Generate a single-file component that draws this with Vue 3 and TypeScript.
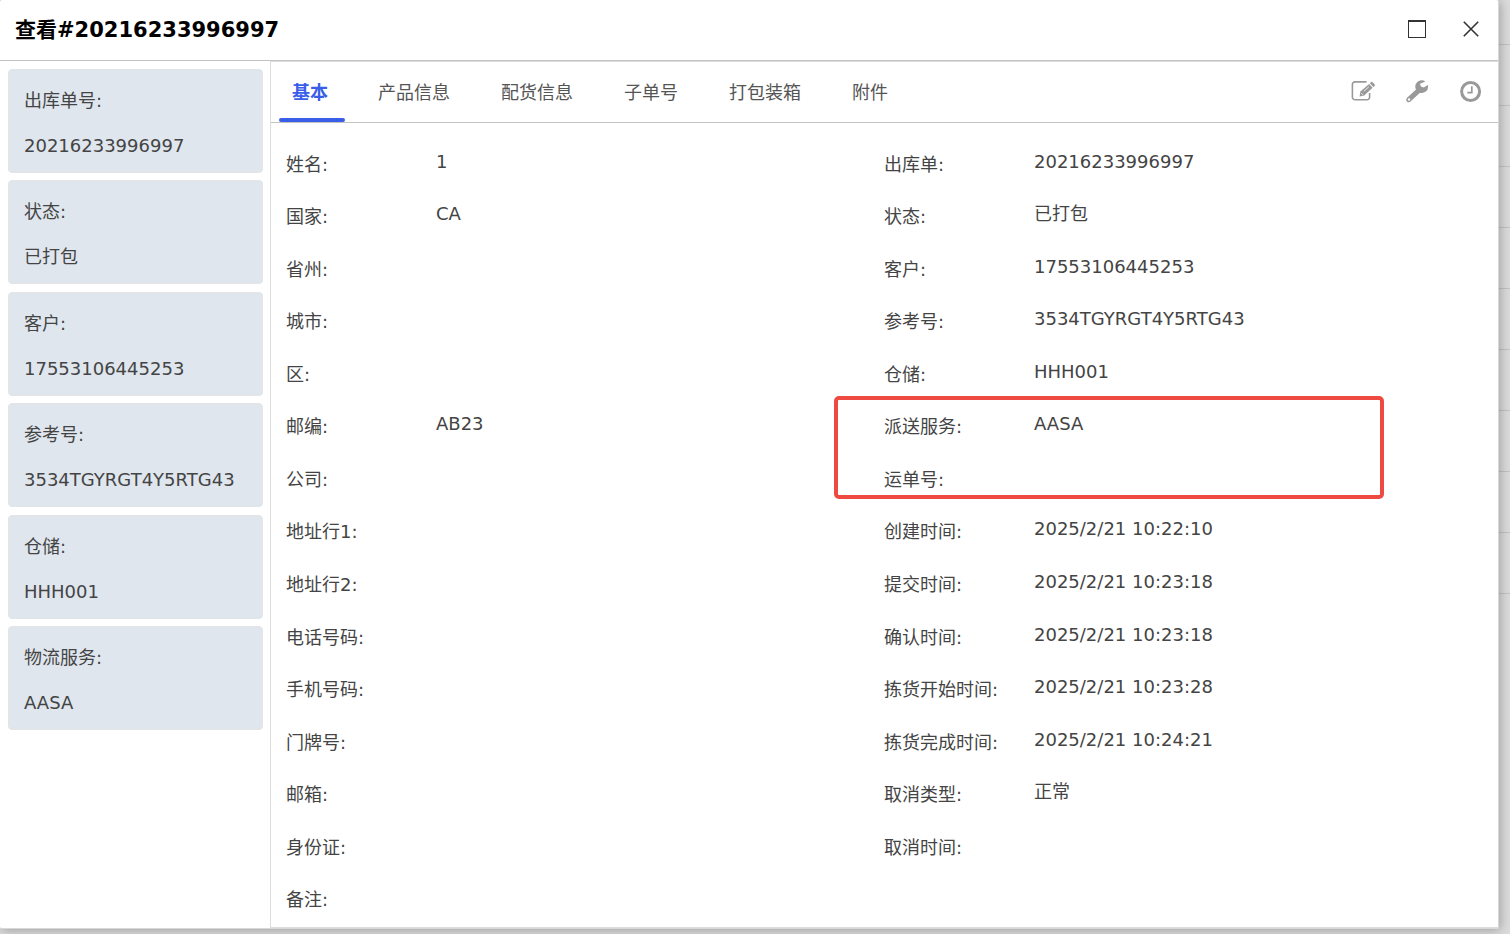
<script setup lang="ts">
import { ref } from 'vue'

interface Field {
  label: string
  value: string
}

const orderNo = '20216233996997'

const summary: Field[] = [
  { label: '出库单号:', value: orderNo },
  { label: '状态:', value: '已打包' },
  { label: '客户:', value: '17553106445253' },
  { label: '参考号:', value: '3534TGYRGT4Y5RTG43' },
  { label: '仓储:', value: 'HHH001' },
  { label: '物流服务:', value: 'AASA' },
]

const tabs: string[] = ['基本', '产品信息', '配货信息', '子单号', '打包装箱', '附件']
const activeTab = ref<string>('基本')

const recipient: Field[] = [
  { label: '姓名:', value: '1' },
  { label: '国家:', value: 'CA' },
  { label: '省州:', value: '' },
  { label: '城市:', value: '' },
  { label: '区:', value: '' },
  { label: '邮编:', value: 'AB23' },
  { label: '公司:', value: '' },
  { label: '地址行1:', value: '' },
  { label: '地址行2:', value: '' },
  { label: '电话号码:', value: '' },
  { label: '手机号码:', value: '' },
  { label: '门牌号:', value: '' },
  { label: '邮箱:', value: '' },
  { label: '身份证:', value: '' },
  { label: '备注:', value: '' },
]

const orderHead: Field[] = [
  { label: '出库单:', value: orderNo },
  { label: '状态:', value: '已打包' },
  { label: '客户:', value: '17553106445253' },
  { label: '参考号:', value: '3534TGYRGT4Y5RTG43' },
  { label: '仓储:', value: 'HHH001' },
]

const delivery: Field[] = [
  { label: '派送服务:', value: 'AASA' },
  { label: '运单号:', value: '' },
]

const orderTimes: Field[] = [
  { label: '创建时间:', value: '2025/2/21 10:22:10' },
  { label: '提交时间:', value: '2025/2/21 10:23:18' },
  { label: '确认时间:', value: '2025/2/21 10:23:18' },
  { label: '拣货开始时间:', value: '2025/2/21 10:23:28' },
  { label: '拣货完成时间:', value: '2025/2/21 10:24:21' },
  { label: '取消类型:', value: '正常' },
  { label: '取消时间:', value: '' },
]

const order: Field[] = [...orderHead, ...delivery, ...orderTimes]
const firstMarked = orderHead.length
</script>

<template>
  <div class="page">
    <div class="backdrop" aria-hidden="true">
      <div v-for="n in 10" :key="n" class="backdrop-row"></div>
    </div>

    <section class="dialog" role="dialog" aria-labelledby="dialog-title">
      <header class="dialog-head">
        <h1 id="dialog-title">查看#{{ orderNo }}</h1>
        <div class="window-buttons">
          <button type="button" aria-label="最大化">
            <svg width="24" height="24" viewBox="0 0 24 24" fill="none" stroke="#333">
              <path d="M3.5 3v18M20.5 3v18" stroke-width="1" />
              <path d="M3 4h18" stroke-width="2" />
              <path d="M3 20.5h18" stroke-width="1" />
            </svg>
          </button>
          <button type="button" aria-label="关闭">
            <svg width="24" height="24" viewBox="0 0 24 24" fill="none" stroke="#333" stroke-width="1.6">
              <path d="M4.8 4.8l14.4 14.4M19.2 4.8L4.8 19.2" />
            </svg>
          </button>
        </div>
      </header>

      <div class="dialog-body">
        <aside class="sidebar">
          <dl class="cards">
            <div v-for="item in summary" :key="item.label" class="card">
              <dt>{{ item.label }}</dt>
              <dd>{{ item.value }}</dd>
            </div>
          </dl>
        </aside>

        <main class="panel">
          <div class="toolbar">
            <nav class="tabs" role="tablist">
              <button
                v-for="tab in tabs"
                :key="tab"
                type="button"
                role="tab"
                class="tab"
                :class="{ active: tab === activeTab }"
                :aria-selected="tab === activeTab"
                @click="activeTab = tab"
              >
                {{ tab }}
              </button>
            </nav>
            <div class="tools">
              <button type="button" aria-label="编辑">
                <svg width="24" height="24" viewBox="0 0 24 24">
                  <path d="M15.500 2.900H4a2.600 2.600 0 0 0-2.600 2.600v12.700a2.600 2.600 0 0 0 2.600 2.600h12a2.600 2.600 0 0 0 2.600-2.600V14" fill="none" stroke="#999" stroke-width="1.600" />
                  <path d="M8.600 17.600l.8-5.100 8.700-7.600 3.500 3.900-8.400 7.700z" fill="#999" />
                  <path d="M18.900 4.200l1.300-1.100a1.100 1.100 0 0 1 1.500.1l2 2.300a1.100 1.100 0 0 1-.1 1.500l-1.300 1.100z" fill="#999" />
                  <path d="M10.200 14.100l1.800 1.900M12.800 12.300l5-4.500" stroke="#fff" stroke-width=".8" fill="none" />
                </svg>
              </button>
              <button type="button" aria-label="设置">
                <svg width="24" height="24" viewBox="0 0 24 24">
                  <path d="M3.800 20.700l9.200-8.600" fill="none" stroke="#999" stroke-width="5" stroke-linecap="round" />
                  <path d="M20.400 2.400a6.400 6.400 0 1 0 2.700 5.200l-.3-1.700-4 2.600-2.900-.9-.9-2.900z" fill="#999" />
                  <circle cx="4" cy="20.500" r="1.200" fill="#fff" />
                </svg>
              </button>
              <button type="button" aria-label="历史">
                <svg width="24" height="24" viewBox="0 0 24 24" fill="none" stroke="#999">
                  <circle cx="11.600" cy="12.500" r="9" stroke-width="3" />
                  <path d="M12.800 7.200v6.400H8.300" stroke-width="1.700" />
                </svg>
              </button>
            </div>
          </div>

          <div class="details">
            <dl class="column">
              <div v-for="item in recipient" :key="item.label" class="row">
                <dt>{{ item.label }}</dt>
                <dd>{{ item.value }}</dd>
              </div>
            </dl>
            <dl class="column">
              <div
                v-for="(item, index) in order"
                :key="item.label"
                class="row"
                :class="{ marked: index === firstMarked }"
              >
                <dt>{{ item.label }}</dt>
                <dd>{{ item.value }}</dd>
              </div>
            </dl>
          </div>
        </main>
      </div>
    </section>
  </div>
</template>

<style>
html,
body {
  margin: 0;
  background: #dcdcdc;
}
</style>

<style scoped>
.page {
  position: relative;
  box-sizing: border-box;
  min-height: 100vh;
  display: flex;
  padding: 0 11px 5px 0;
  overflow: hidden;
  color: #444;
  font-family: Verdana, "DejaVu Sans", "Noto Sans CJK SC", sans-serif;
  font-size: 18px;
  line-height: 24px;
}

.backdrop {
  position: absolute;
  inset: 0;
  padding-top: 44px;
}

.backdrop-row {
  box-sizing: border-box;
  height: 61px;
  border-top: 1px solid #c3c3c3;
}

.dialog {
  position: relative;
  box-sizing: border-box;
  flex: 1;
  min-width: 0;
  display: flex;
  flex-direction: column;
  background: #fff;
  border-right: 1px solid #d8d8d8;
  border-bottom: 1px solid #d8d8d8;
  border-radius: 2px;
  box-shadow: 1px 1px 12px rgba(0, 0, 0, 0.3);
}

button {
  margin: 0;
  padding: 0;
  border: 0;
  background: none;
  color: inherit;
  font: inherit;
  cursor: pointer;
}

svg {
  display: block;
}

.dialog-head {
  display: flex;
  align-items: center;
  justify-content: space-between;
  height: 60px;
  padding: 0 15px;
  border-bottom: 1px solid #c3c3c3;
}

h1 {
  margin: 0;
  color: #000;
  font-size: 21px;
  line-height: 28px;
  font-weight: 700;
}

.window-buttons,
.tools {
  display: flex;
  gap: 30px;
  padding-bottom: 2px;
}

.dialog-body {
  flex: 1;
  display: flex;
}

.sidebar {
  flex: none;
  width: 255px;
  padding: 8px 7px 8px 8px;
}

dl,
dt,
dd {
  margin: 0;
}

.cards {
  display: flex;
  flex-direction: column;
  justify-content: space-between;
  min-height: 661px;
}

.card {
  box-sizing: border-box;
  min-height: 104px;
  padding: 18px 15px;
  border: 1px solid #e4e4e4;
  border-radius: 4px;
  background: #dfe6ee;
}

.card dt {
  padding-top: 1px;
  margin-bottom: 21px;
}

.card dd {
  margin-bottom: -4px;
}

.panel {
  flex: 1;
  min-width: 0;
  display: flex;
  flex-direction: column;
  border: 1px solid #dcdcdc;
  border-right: 0;
}

.toolbar {
  display: flex;
  justify-content: space-between;
  align-items: center;
  height: 60px;
  padding: 0 15px 0 8px;
  border-bottom: 1px solid #c3c3c3;
}

.tabs {
  display: flex;
  align-self: stretch;
  gap: 15px;
}

.tab {
  position: relative;
  padding: 2px 18px 0;
  color: #555;
}

.tab.active {
  padding: 2px 17px 0 13px;
  color: #3b5ee8;
  font-weight: 700;
}

.tab.active::after {
  content: "";
  position: absolute;
  inset: auto 0 0;
  height: 4px;
  border-radius: 2px;
  background: #3b5ee8;
}

.details {
  flex: 1;
  display: grid;
  grid-template-columns: 1fr 1fr;
  padding: 14px 16px 2px 15px;
}

.column {
  display: grid;
  grid-template-rows: repeat(15, 1fr);
}

.row {
  position: relative;
  display: flex;
  align-items: center;
}

.row dt {
  flex: none;
  width: 150px;
  padding-top: 3px;
}

.row dd {
  padding-bottom: 3px;
}

/* Frame around the delivery service and tracking number rows */
.marked::after {
  content: "";
  position: absolute;
  box-sizing: border-box;
  top: -4px;
  left: -50px;
  width: 550px;
  height: 103px;
  border: 4px solid #ee4a41;
  border-radius: 5px;
  pointer-events: none;
}
</style>
